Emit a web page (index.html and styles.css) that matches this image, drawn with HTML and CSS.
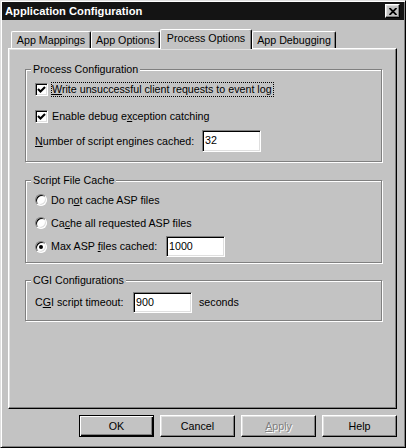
FILE: index.html
```html
<!DOCTYPE html>
<html>
<head>
<meta charset="utf-8">
<link rel="stylesheet" href="styles.css">
</head>
<body>
<div class="window">
  <div class="titlebar">
    <span class="title">Application Configuration</span>
    <span class="close"><svg width="8" height="7" viewBox="0 0 8 7"><path d="M0.5 0 L7.5 7 M7.5 0 L0.5 7" stroke="#000" stroke-width="1.8" fill="none"/></svg></span>
  </div>
  <div class="body">
    <div class="tabs">
      <div class="tab w1">App Mappings</div>
      <div class="tab w2">App Options</div>
      <div class="tab w3 active">Process Options</div>
      <div class="tab w4">App Debugging</div>
    </div>
    <div class="panel">
      <div class="group g1">
        <span class="gtitle">Process Configuration</span>
        <div class="row h13">
          <span class="check"><svg width="9" height="9" viewBox="0 0 9 9"><path d="M1 4 L3.5 6.5 L8 2" stroke="#000" stroke-width="2.1" fill="none"/></svg></span>
          <span class="lbl lc focus"><u>W</u>rite unsuccessful client requests to event log</span>
        </div>
        <div class="row h13 m14">
          <span class="check"><svg width="9" height="9" viewBox="0 0 9 9"><path d="M1 4 L3.5 6.5 L8 2" stroke="#000" stroke-width="2.1" fill="none"/></svg></span>
          <span class="lbl lc">Enable debug e<u>x</u>ception catching</span>
        </div>
        <div class="row m7">
          <span class="text tw1"><u>N</u>umber of script engines cached:</span>
          <span class="field tall">32</span>
        </div>
      </div>
      <div class="group g2">
        <span class="gtitle">Script File Cache</span>
        <div class="row h12">
          <span class="radio"></span>
          <span class="lbl lr">Do n<u>o</u>t cache ASP files</span>
        </div>
        <div class="row h12 m11">
          <span class="radio"></span>
          <span class="lbl lr">Ca<u>c</u>he all requested ASP files</span>
        </div>
        <div class="row m7">
          <span class="radio"><span class="dot"></span></span>
          <span class="lbl lr tw2">Max ASP <u>f</u>iles cached:</span>
          <span class="field">1000</span>
        </div>
      </div>
      <div class="group g3">
        <span class="gtitle">CGI Configurations</span>
        <div class="row">
          <span class="text tw3">C<u>G</u>I script timeout:</span>
          <span class="field">900</span>
          <span class="text unit">seconds</span>
        </div>
      </div>
    </div>
    <div class="buttons">
      <div class="btn default">OK</div>
      <div class="btn">Cancel</div>
      <div class="btn disabled"><u>A</u>pply</div>
      <div class="btn">Help</div>
    </div>
  </div>
</div>
</body>
</html>
```
FILE: styles.css
```css
* { box-sizing: border-box; }
html, body { margin: 0; padding: 0; }
body {
  width: 406px;
  height: 448px;
  overflow: hidden;
  background: #c3c3c3;
  font-family: "Liberation Sans", Arial, sans-serif;
  font-size: 10.7px;
  color: #000;
}
.window {
  width: 406px;
  height: 448px;
  border: 1px solid;
  border-color: #dfdfdf #000 #000 #dfdfdf;
  box-shadow: inset 1px 1px #fff, inset -1px -1px #808080;
  padding: 1px;
  display: flex;
  flex-direction: column;
  background: #c3c3c3;
}
.titlebar {
  height: 18px;
  background: #141414;
  display: flex;
  align-items: center;
  justify-content: space-between;
  padding: 0 4px 0 3px;
}
.title {
  color: #fff;
  font-weight: bold;
  font-size: 11.2px;
  line-height: 13px;
}
.close {
  width: 15px;
  height: 14px;
  background: #c3c3c3;
  border: 1px solid;
  border-color: #fff #000 #000 #fff;
  box-shadow: inset -1px -1px #808080, inset 1px 1px #dfdfdf;
  display: flex;
  align-items: center;
  justify-content: center;
}
.close svg { display: block; }
.body {
  flex: 1;
  display: flex;
  flex-direction: column;
  padding: 9px 7px 0 6px;
}
.tabs {
  display: flex;
  align-items: flex-end;
  height: 19px;
  padding-left: 3px;
}
.tab {
  height: 17px;
  background: #c3c3c3;
  border-top: 1px solid #fff;
  border-left: 1px solid #fff;
  border-right: 1px solid #000;
  box-shadow: inset -1px 0 #808080;
  border-radius: 2px 2px 0 0;
  display: flex;
  align-items: center;
  justify-content: center;
  white-space: nowrap;
  line-height: 13px;
}
.tab.active {
  height: 20px;
  margin-bottom: -1px;
  position: relative;
  z-index: 1;
  padding-bottom: 2px;
}
.w1 { width: 80px; }
.w2 { width: 69px; }
.w3 { width: 92px; }
.w4 { width: 84px; }
.panel {
  height: 361px;
  border: 1px solid;
  border-color: #fff #000 #000 #fff;
  box-shadow: inset -1px -1px #808080, inset 1px 1px #dfdfdf;
  padding: 20px 14px 0 16px;
  display: flex;
  flex-direction: column;
}
.group {
  position: relative;
  border: 1px solid #808080;
  box-shadow: inset 1px 1px #fff, 1px 1px #fff;
  padding-left: 9px;
}
.g1 { padding-top: 13px; padding-bottom: 9px; }
.g2 { margin-top: 18px; padding-top: 13px; padding-bottom: 5px; }
.g3 { margin-top: 17px; padding-top: 11px; padding-bottom: 7px; }
.gtitle {
  position: absolute;
  top: -7px;
  left: 5px;
  padding: 0 2px;
  background: #c3c3c3;
  line-height: 13px;
  white-space: nowrap;
}
.row {
  display: flex;
  align-items: center;
  white-space: nowrap;
}
.h13 { height: 13px; }
.h12 { height: 12px; }
.m14 { margin-top: 14px; }
.m11 { margin-top: 11px; }
.m7 { margin-top: 7px; }
.check {
  width: 13px;
  height: 13px;
  flex: none;
  background: #fff;
  border: 1px solid;
  border-color: #808080 #fff #fff #808080;
  box-shadow: inset 1px 1px #000, inset -1px -1px #dfdfdf;
  padding: 1px;
}
.check svg { display: block; }
.radio {
  width: 12px;
  height: 12px;
  flex: none;
  border-radius: 50%;
  background: #fff;
  border: 1px solid;
  border-color: #808080 #fff #fff #808080;
  box-shadow: inset 1px 1px #000, inset -1px -1px #dfdfdf;
  display: flex;
  align-items: center;
  justify-content: center;
}
.dot {
  width: 4px;
  height: 4px;
  border-radius: 50%;
  background: #000;
}
.lbl {
  border: 1px solid transparent;
  line-height: 13px;
  padding-right: 1px;
}
.lc { margin-left: 3px; }
.lr { margin-left: 3px; }
.focus { border: 1px dotted #000; }
.text { line-height: 13px; }
.tw1 { width: 167px; }
.tw2 { width: 116px; }
.tw3 { width: 98px; }
.unit { margin-left: 7px; }
.field {
  width: 59px;
  height: 21px;
  flex: none;
  background: #fff;
  border: 1px solid;
  border-color: #808080 #fff #fff #808080;
  box-shadow: inset 1px 1px #000, inset -1px -1px #dfdfdf;
  padding: 0 0 1px 2px;
  display: flex;
  align-items: center;
  line-height: 13px;
}
.field.tall { height: 22px; }
.buttons {
  display: flex;
  justify-content: flex-end;
  gap: 6px;
  margin-top: 6px;
}
.btn {
  width: 75px;
  height: 22px;
  border: 1px solid;
  border-color: #fff #000 #000 #fff;
  box-shadow: inset -1px -1px #808080, inset 1px 1px #dfdfdf;
  display: flex;
  align-items: center;
  justify-content: center;
  line-height: 13px;
}
.btn.default {
  border-color: #000;
  box-shadow: inset 1px 1px #fff, inset -1px -1px #000, inset -2px -2px #808080;
}
.btn.disabled {
  color: #808080;
  text-shadow: 1px 1px #fff;
}
```
